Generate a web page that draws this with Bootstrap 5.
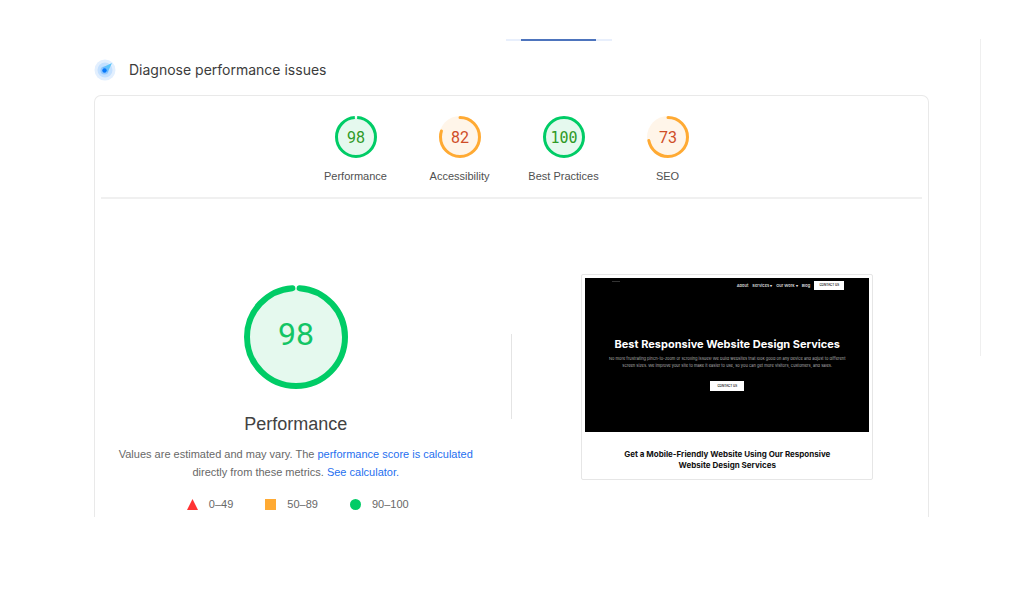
<!DOCTYPE html>
<html lang="en">
<head>
<meta charset="utf-8">
<meta name="viewport" content="width=device-width, initial-scale=1">
<title>Diagnose performance issues</title>
<link href="https://cdn.jsdelivr.net/npm/bootstrap@5.3.0/dist/css/bootstrap.min.css" rel="stylesheet">
<style>
  body { font-family: "Liberation Sans", Arial, sans-serif; font-size: 11px; line-height: 18px; color: #505050; background: #fff; }
  .sheet { padding: 39px 43px 0 94px; gap: 51px; }
  .side-rule { width: 1px; height: 317px; background: #efefef; }
  .tab-strip { width: 106px; height: 2px; margin-left: 412px; padding: 0 16px 0 15px; background: #e8effc; }
  .tab-strip span { background: #4d74bd; }
  .page-title { font: 400 14px/20px Inter, Roboto, sans-serif; color: #3c3c3c; }
  .heading-row { gap: 13px; padding: 18px 0 0; }
  .report { margin-top: 14px; border: 1px solid #e9e9e9; border-bottom: 0; border-radius: 7px 7px 0 0; }
  .scores { margin: 0 6px; padding: 19px 0 12px; border-bottom: 2px solid #f0f0f0; }
  .score { width: 104px; gap: 8px; }
  .dial { display: block; font-family: Roboto, sans-serif; }
  .dial .mono { font-family: "DejaVu Sans Mono", monospace; }
  .details { display: grid; grid-template-columns: 1fr 30px 1fr; padding-top: 75px; }
  .mid-rule { width: 1px; height: 85px; margin-top: 60px; background: #e4e4e4; }
  .summary { padding-top: 10px; }
  .summary-title { font-size: 18px; line-height: 24px; margin: 22px 0 9px; color: #424242; }
  .summary-text { color: #686868; }
  .summary a { color: #1f6fef; }
  .legend { gap: 32px; margin: 14px 0 4px; padding-left: 4px; color: #686868; }
  .legend span { gap: 11px; }
  .preview { width: 292px; border: 1px solid #e6e6e6; border-radius: 2px; padding: 3px 3px 8px; font-family: Inter, sans-serif; }
  .hero { height: 154px; background: #000; color: #fff; }
  .site-nav { gap: 4px; padding: 3px 25px 0 27px; font-size: 4px; line-height: 9px; font-weight: 600; }
  .site-nav a { color: #ddd; }
  .site-logo { width: 8px; height: 1px; background: #333; }
  .cta { border: 0; border-radius: 0; background: #fff; color: #222; font: 600 3px/9px Inter, sans-serif; padding: 0 4px; min-width: 30px; }
  .cta-wide { display: block; margin: 0 auto; min-width: 34px; line-height: 10px; }
  .hero-title { font-size: 11px; line-height: 14px; font-weight: 700; margin: 47px 0 4px; }
  .hero-text { font-size: 4px; line-height: 7px; color: #b0b0b0; margin-bottom: 12px; }
  .sub-title { font-size: 8px; line-height: 11px; font-weight: 700; color: #111; margin: 17px 0 0; }
</style>
</head>
<body>
<main class="sheet d-flex">
  <div class="flex-grow-1">
    <div class="tab-strip d-flex"><span class="flex-grow-1"></span></div>
    <header class="heading-row d-flex align-items-center">
      <svg width="22" height="22" viewBox="0 0 22 22" aria-hidden="true">
        <circle cx="11" cy="11" r="10.5" fill="#e2effe"/><circle cx="11" cy="11" r="7.5" fill="#c3e0ff"/>
        <path d="M18 4 13.5 13.5 8.5 8.5Z" fill="#5cc5fa"/><circle cx="10.500" cy="11.500" r="4" fill="#72b8ff" opacity=".6"/><circle cx="10.500" cy="11.500" r="2.200" fill="#0878fa"/>
      </svg>
      <h1 class="page-title m-0">Diagnose performance issues</h1>
    </header>
    <section class="report">
      <div class="scores d-flex justify-content-center">
        <div class="score d-flex flex-column align-items-center">
          <svg class="dial" width="44" height="44" viewBox="0 0 44 44"><circle cx="22" cy="22" r="19.500" fill="#e5f9ee"/><circle cx="22" cy="22" r="19.500" fill="none" stroke="#0c6" stroke-width="3" pathLength="100" stroke-dasharray="98 2" stroke-dashoffset="-1" transform="rotate(-90 22 22)"/><text x="22" y="28" text-anchor="middle" font-size="16" fill="#2f9a27">98</text></svg>
          <span>Performance</span>
        </div>
        <div class="score d-flex flex-column align-items-center">
          <svg class="dial" width="44" height="44" viewBox="0 0 44 44"><circle cx="22" cy="22" r="21" fill="#fff5e9"/><circle cx="22" cy="22" r="19.500" fill="none" stroke="#fa3" stroke-width="3" stroke-linecap="round" pathLength="100" stroke-dasharray="80 20" transform="rotate(-90 22 22)"/><text x="22" y="28" text-anchor="middle" font-size="16" fill="#cf4d27">82</text></svg>
          <span>Accessibility</span>
        </div>
        <div class="score d-flex flex-column align-items-center">
          <svg class="dial" width="44" height="44" viewBox="0 0 44 44"><circle cx="22" cy="22" r="19.500" fill="#e5f9ee" stroke="#0c6" stroke-width="3"/><text class="mono" x="22" y="28" text-anchor="middle" font-size="15" fill="#2f9a27">100</text></svg>
          <span>Best Practices</span>
        </div>
        <div class="score d-flex flex-column align-items-center">
          <svg class="dial" width="44" height="44" viewBox="0 0 44 44"><circle cx="22" cy="22" r="21" fill="#fff5e9"/><circle cx="22" cy="22" r="19.500" fill="none" stroke="#fa3" stroke-width="3" stroke-linecap="round" pathLength="100" stroke-dasharray="72 28" transform="rotate(-90 22 22)"/><text x="22" y="28" text-anchor="middle" font-size="16" fill="#cf4d27">73</text></svg>
          <span>SEO</span>
        </div>
      </div>
      <div class="details">
        <div class="summary d-flex flex-column align-items-center text-center">
          <svg class="dial" width="106" height="106" viewBox="0 0 106 106"><circle cx="53" cy="53" r="49" fill="#e5f9ee"/><circle cx="53" cy="53" r="49" fill="none" stroke="#0c6" stroke-width="6" stroke-linecap="round" pathLength="100" stroke-dasharray="97.600 2.400" stroke-dashoffset="-1.200" transform="rotate(-90 53 53)"/><text x="53" y="61" text-anchor="middle" font-size="32" fill="#13c565">98</text></svg>
          <h2 class="summary-title fw-normal">Performance</h2>
          <p class="summary-text m-0">Values are estimated and may vary. The <a class="text-decoration-none" href="#">performance score is calculated</a><br>directly from these metrics. <a class="text-decoration-none" href="#">See calculator.</a></p>
          <div class="legend d-flex">
            <span class="d-flex align-items-center"><svg width="11" height="11" viewBox="0 0 11 11"><path d="M5.500 0 11 11H0Z" fill="#f33"/></svg>0–49</span>
            <span class="d-flex align-items-center"><svg width="11" height="11" viewBox="0 0 11 11"><path d="M0 0H11V11H0Z" fill="#fa3"/></svg>50–89</span>
            <span class="d-flex align-items-center"><svg width="11" height="11" viewBox="0 0 11 11"><circle cx="5.500" cy="5.500" r="5.500" fill="#0c6"/></svg>90–100</span>
          </div>
        </div>
        <div class="mid-rule mx-auto"></div>
        <div>
          <div class="preview mx-auto text-center">
            <div class="hero">
              <nav class="site-nav d-flex">
                <span class="site-logo me-auto"></span>
                <a class="text-decoration-none" href="#">About</a>
                <a class="text-decoration-none" href="#">Services ▾</a>
                <a class="text-decoration-none" href="#">Our Work ▾</a>
                <a class="text-decoration-none" href="#">Blog</a>
                <button type="button" class="cta">CONTACT US</button>
              </nav>
              <h3 class="hero-title">Best Responsive Website Design Services</h3>
              <p class="hero-text">No more frustrating pinch-to-zoom or scrolling issues! We build websites that look good on any device and adjust to different<br>screen sizes. We improve your site to make it easier to use, so you can get more visitors, customers, and sales.</p>
              <button type="button" class="cta cta-wide">CONTACT US</button>
            </div>
            <h4 class="sub-title">Get a Mobile-Friendly Website Using Our Responsive<br>Website Design Services</h4>
          </div>
        </div>
      </div>
    </section>
  </div>
  <div class="side-rule flex-shrink-0"></div>
</main>
<script src="https://cdn.jsdelivr.net/npm/bootstrap@5.3.0/dist/js/bootstrap.bundle.min.js"></script>
</body>
</html>
